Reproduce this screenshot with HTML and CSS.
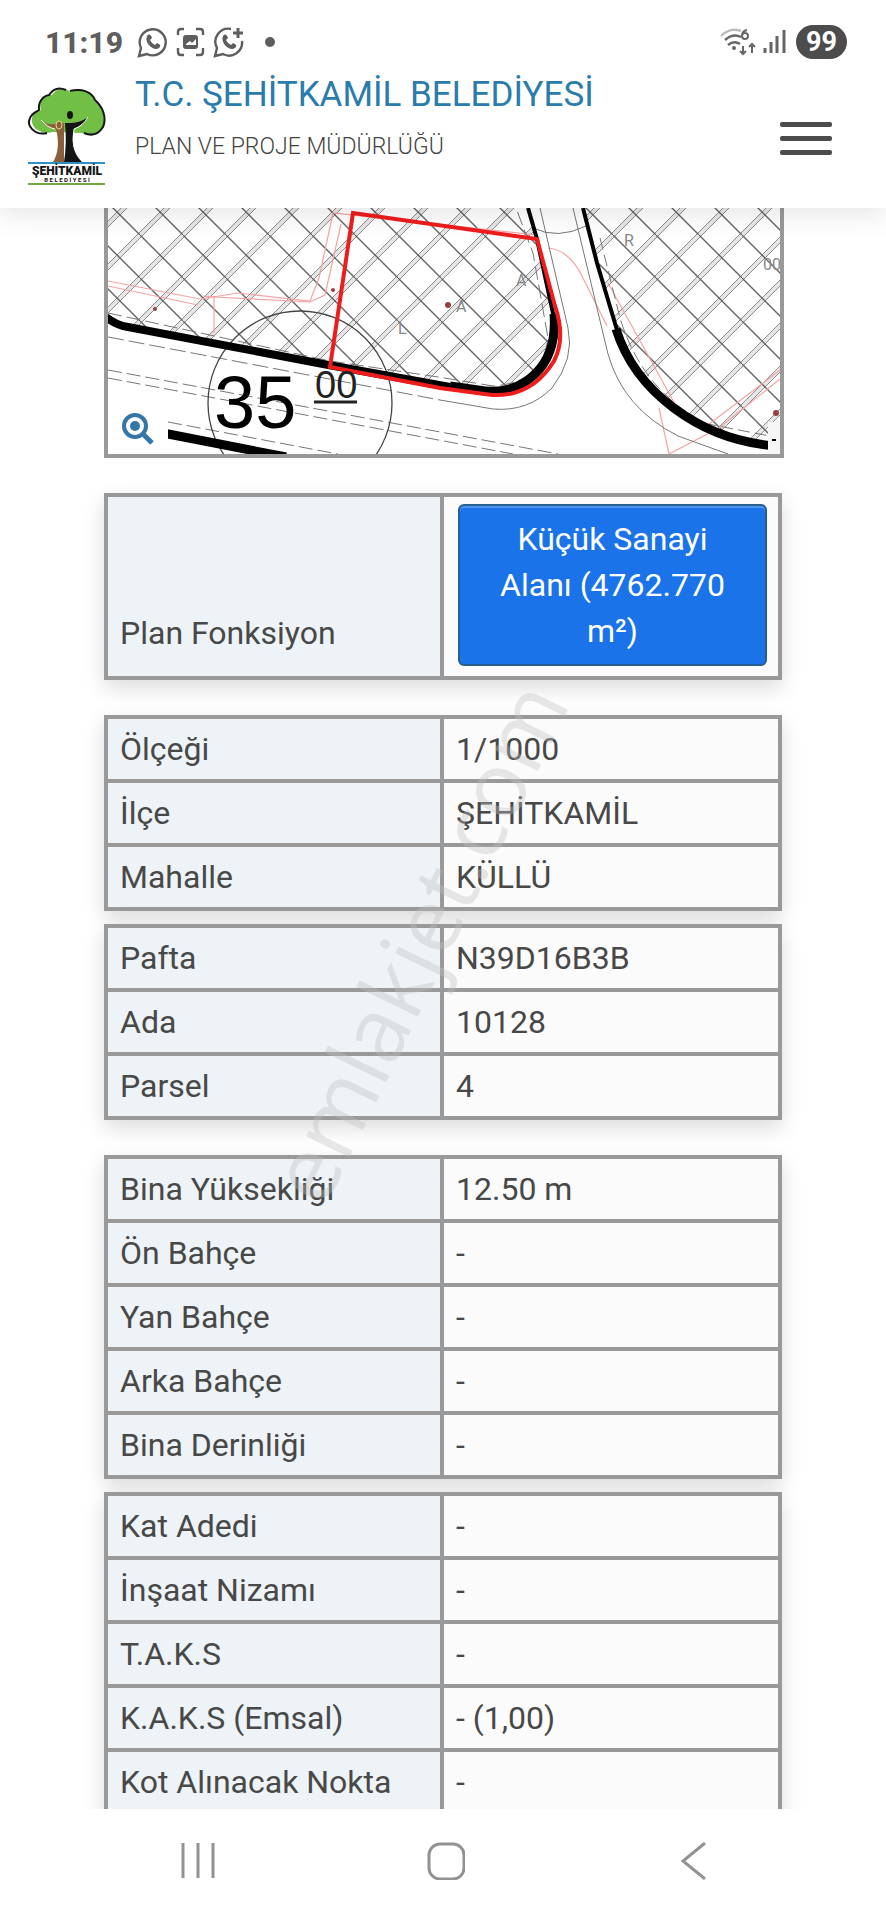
FILE: index.html
```html
<!DOCTYPE html>
<html lang="tr">
<head>
  <meta charset="UTF-8">
  <meta name="viewport" content="width=device-width, initial-scale=1.0">
  <title>T.C. Şehitkamil Belediyesi</title>
  <link rel="stylesheet" href="styles.css">
</head>
<body>
  <div class="status-bar">
    <span class="clock">11:19</span>
    <svg class="status-icons" width="140" height="34" viewBox="0 0 140 34" fill="none" stroke="#5e5e5e" stroke-width="2.4">
      <!-- whatsapp -->
      <path d="M2 31l2-8a13 13 0 1 1 6 6z"/>
      <path d="M10 11c2-3 4-1 5 2l-2 2c1 2 3 4 5 5l2-2c4 2 4 3 2 5-5 4-15-5-12-12z" fill="#5e5e5e" stroke="none"/>
      <!-- screenshot -->
      <path d="M41 10V7q0-3 3-3h3M59 4h4q3 0 3 3v3M41 23v4q0 3 3 3h3M59 30h4q3 0 3-3v-4"/>
      <rect x="46" y="10" width="15" height="14" rx="3" fill="#5e5e5e" stroke="none"/>
      <path d="M49 20v-1l4-3 2 2 4-4v6z" fill="#fff" stroke="none"/>
      <!-- whatsapp + -->
      <path d="M94 4a13 13 0 0 0-14 19l-2 8 8-2a13 13 0 0 0 19-13"/>
      <path d="M101 3v10M96 8h10" stroke-width="3"/>
      <path d="M86 11c2-3 4-1 5 2l-2 2c1 2 3 4 5 5l2-2c4 2 4 3 2 5-5 4-15-5-12-12z" fill="#5e5e5e" stroke="none"/>
      <circle cx="133" cy="17" r="5" fill="#5e5e5e" stroke="none"/>
    </svg>
    <svg class="signal-icons" width="68" height="28" viewBox="0 0 68 28" fill="none" stroke="#666" stroke-width="2.4">
      <path d="M1 8Q10-1 21 3" stroke="#bbb"/>
      <path d="M5 12q8-7 16-3M8 17q6-5 12-1"/>
      <circle cx="14" cy="20" r="2" fill="#666" stroke="none"/>
      <path d="M27 2q-5 1-5 6m0 0a3 3 0 1 0 6 0 3 3 0 1 0-6 0" stroke-width="2"/>
      <path d="M23 18v8m-3-3l3 3 3-3M32 25V16m-3 3l3-3 3 3" stroke-width="2"/>
      <path d="M45 20v5M51 14v11M57 8v17M64 2v23" stroke-width="3"/>
    </svg>
    <span class="battery">99</span>
  </div>

  <header class="header">
    <svg class="logo" width="80" height="100" viewBox="0 0 80 100">
      <path d="M26 46C14 49 3 42 5 32c1-4 5-7 9-8-3-8 4-15 11-15 6-9 17-6 18-3 9-3 22-1 25 8 7 8 12 17 8 26-4 9-13 11-21 7z" fill="#71bf44"/>
      <path d="M20 47C8 50-1 40 3 32c2-5 6-6 9-8-1-8 4-14 10-15 4-6 10-8 17-5M43 5c12-3 22 1 25 9 8 7 12 18 8 27-5 8-12 9-19 6" fill="none" stroke="#151515" stroke-width="2"/>
      <path d="M14 35q8 8 15 8 5 20-3 33h11V37l-9 1q-8 1-14-3z" fill="#8b5e3c"/>
      <path d="M38 37c9 0 15 0 23-6-2 6-9 9-14 12-3 13-1 24 8 33H37q3-18 1-39z" fill="#151515"/>
      <path d="M14 34q7 8 14 9M61 31q-5 9-14 12-2 12 1 21" fill="none" stroke="#fff"/>
      <ellipse cx="43" cy="29" rx="3" ry="4" fill="#151515"/>
      <ellipse cx="32" cy="39" rx="3" ry="4" fill="#8b5e3c" stroke="#eadb88"/>
      <path d="M1 77h77" stroke="#2c91c5" stroke-width="2"/>
      <path d="M1 98h77" stroke="#71a83f" stroke-width="2"/>
      <text x="40" y="89" class="logo-name">ŞEHİTKAMİL</text>
      <text x="40" y="96" class="logo-sub">B E L E D İ Y E S İ</text>
    </svg>
    <div class="header-text">
      <h1>T.C. ŞEHİTKAMİL BELEDİYESİ</h1>
      <p>PLAN VE PROJE MÜDÜRLÜĞÜ</p>
    </div>
    <button class="burger-btn" aria-label="Menü">
      <span></span><span></span><span></span>
    </button>
  </header>

  <main class="content">
    <div class="map">
      <svg class="map-img" viewBox="0 0 672 246" preserveAspectRatio="xMidYMid slice">
        <defs>
          <pattern id="hatch" width="43" height="43" patternUnits="userSpaceOnUse" patternTransform="translate(32 27)">
            <path d="M-5 48L48-5M-5 5L5-5M38 48L48 38" stroke="#e6e6e6" stroke-width="4"/>
            <path d="M0 40L40 0M3 43L43 3M0 3L3 0M40 43L43 40" stroke="#8c8c8c"/>
            <path d="M-1-1L44 44" stroke="#666" stroke-width="1.4"/>
          </pattern>
        </defs>
        <rect width="672" height="246" fill="#fff"/>
        <path d="M0 0H420L429 31 444 95 447 112C446 150 425 182 389 184L342 177 15 117 0 110z" fill="url(#hatch)"/>
        <path d="M475 0L489 55 507 119C530 185 590 225 672 238V0z" fill="url(#hatch)"/>

        <!-- cadastral lines -->
        <g fill="none" stroke="#f5a3a3" stroke-width="1.2">
          <path d="M0 73L92 91 130 85 202 93 211 70 225 5 429 27"/>
          <path d="M0 78L90 97M95 88l11 1v36M106 89l96 5 15-7 16-71"/>
          <path d="M440 40q22 2 35 30l24 48M500 75l67 121M551 200l10 46 50-26 61-49M600 217l72-55"/>
        </g>
        <g fill="none" stroke="#777">
          <path d="M0 105L222 153 330 169 385 178Q435 175 440 130L425 45 408 0" stroke-dasharray="14 5"/>
          <path d="M0 129L332 192" stroke-dasharray="16 5"/>
          <path d="M432 0L460 120Q467 150 444 180 420 204 385 201L332 192"/>
          <path d="M465 0L500 146Q515 200 570 228L620 246"/>
          <path d="M492 30L512 110Q535 185 600 216L672 230" stroke-dasharray="12 5"/>
          <path d="M0 162L450 246M0 170L405 246M60 214L230 246" stroke-dasharray="14 5"/>
          <path d="M425 20Q450 32 478 18"/>
        </g>
        <circle cx="192" cy="195" r="92" fill="none" stroke="#444" stroke-width="1.3"/>

        <!-- roads -->
        <g fill="none" stroke="#000">
          <path d="M-2 109Q8 117 20 119L215 156 342 179" stroke-width="8"/>
          <path d="M342 178L370 182Q405 188 427 166 449 145 446 106" stroke-width="9"/>
          <path d="M420 0L429 31 446 110M475 0L489 55 509 122" stroke-width="4"/>
          <path d="M508 121C527 182 590 232 668 238" stroke-width="9"/>
          <path d="M55 225L178 249" stroke-width="9"/>
        </g>
        <path d="M222 159L245 5 429 31 447 98Q458 130 446 153 424 189 384 187L332 180z" fill="none" stroke="#ef1c1c" stroke-width="4"/>

        <g fill="#964040">
          <circle cx="47" cy="101" r="2"/><circle cx="225" cy="82" r="2"/>
          <circle cx="340" cy="97" r="3"/><circle cx="668" cy="205" r="3"/>
        </g>
        <g class="map-mark">
          <text x="516" y="38">R</text><text x="655" y="62">00</text><text x="348" y="104">A</text>
          <text x="290" y="126">L</text><text x="408" y="78">A</text>
        </g>
        <text x="106" y="220" class="road-width">35</text>
        <text x="207" y="190" class="road-cm">00</text>
        <path d="M206 194h43" stroke="#222" stroke-width="3"/>
        <path d="M660 214h12v32h-12z" fill="#f6f6f6"/>
        <path d="M664 232h4" stroke="#000" stroke-width="2"/>
      </svg>
      <button class="zoom-btn" aria-label="Yakınlaştır">
        <svg width="34" height="34" viewBox="0 0 34 34" fill="none" stroke="#3576a8">
          <circle cx="14" cy="14" r="11" stroke-width="4"/>
          <circle cx="14" cy="14" r="5" fill="#3576a8" stroke="none"/>
          <path d="M22 22l9 9" stroke-width="5"/>
        </svg>
      </button>
    </div>

    <table class="info function">
      <tr>
        <th>Plan Fonksiyon</th>
        <td><button class="plan-btn">Küçük Sanayi Alanı (4762.770 m²)</button></td>
      </tr>
    </table>

    <table class="info">
      <tr><th>Ölçeği</th><td>1/1000</td></tr>
      <tr><th>İlçe</th><td>ŞEHİTKAMİL</td></tr>
      <tr><th>Mahalle</th><td>KÜLLÜ</td></tr>
    </table>

    <table class="info joined">
      <tr><th>Pafta</th><td>N39D16B3B</td></tr>
      <tr><th>Ada</th><td>10128</td></tr>
      <tr><th>Parsel</th><td>4</td></tr>
    </table>

    <table class="info">
      <tr><th>Bina Yüksekliği</th><td>12.50 m</td></tr>
      <tr><th>Ön Bahçe</th><td>-</td></tr>
      <tr><th>Yan Bahçe</th><td>-</td></tr>
      <tr><th>Arka Bahçe</th><td>-</td></tr>
      <tr><th>Bina Derinliği</th><td>-</td></tr>
    </table>

    <table class="info joined">
      <tr><th>Kat Adedi</th><td>-</td></tr>
      <tr><th>İnşaat Nizamı</th><td>-</td></tr>
      <tr><th>T.A.K.S</th><td>-</td></tr>
      <tr><th>K.A.K.S (Emsal)</th><td>- (1,00)</td></tr>
      <tr><th>Kot Alınacak Nokta</th><td>-</td></tr>
    </table>
  </main>

  <nav class="nav-bar">
    <button aria-label="Son uygulamalar">
      <svg width="38" height="38" viewBox="0 0 38 38" stroke="#929292" stroke-width="3"><path d="M4 1v35M19 1v35M34 1v35"/></svg>
    </button>
    <button aria-label="Ana ekran">
      <svg width="38" height="38" viewBox="0 0 38 38" fill="none" stroke="#929292" stroke-width="3"><rect x="2" y="2" width="35" height="35" rx="11"/></svg>
    </button>
    <button aria-label="Geri">
      <svg width="38" height="38" viewBox="0 0 38 38" fill="none" stroke="#929292" stroke-width="3"><path d="M30 1L8 19l22 18"/></svg>
    </button>
  </nav>

  <div class="watermark">emlakjet.com</div>
</body>
</html>
```

FILE: styles.css
```css
* {
  box-sizing: border-box;
}

body {
  margin: 0;
  height: 100vh;
  display: flex;
  flex-direction: column;
  position: relative;
  overflow: hidden;
  background: #fff;
  color: #484848;
  font-family: Roboto, sans-serif;
  font-size: 32px;
}

button {
  border: none;
  background: none;
  padding: 0;
  font: inherit;
  cursor: pointer;
}

svg {
  display: block;
}

.status-bar {
  display: flex;
  align-items: center;
  height: 72px;
  padding: 12px 39px 0 45px;
  background: #fff;
  z-index: 2;
}

.clock {
  color: #5e5e5e;
  font-size: 30px;
  font-weight: 800;
}

.status-icons {
  margin-left: 14px;
}

.signal-icons {
  margin-left: auto;
}

.battery {
  margin-left: 8px;
  width: 51px;
  height: 34px;
  border-radius: 17px;
  background: #4c4c4c;
  color: #fff;
  font-size: 27px;
  font-weight: bold;
  line-height: 34px;
  text-align: center;
}

.header {
  display: flex;
  height: 136px;
  padding: 0 54px 0 27px;
  background: #fff;
  box-shadow: 0 4px 28px rgba(0, 0, 0, 0.12);
  z-index: 1;
}

.logo {
  margin-top: 14px;
  overflow: visible;
}

.logo-name {
  font-size: 12px;
  font-weight: 900;
  text-anchor: middle;
  fill: #151515;
}

.logo-sub {
  font-size: 6px;
  font-weight: bold;
  text-anchor: middle;
  fill: #151515;
}

.header-text {
  flex: 1;
  padding-left: 28px;
}

.header h1 {
  margin: 0;
  color: #2a7cac;
  font-size: 35px;
  font-weight: normal;
  line-height: 46px;
}

.header p {
  margin: 15px 0 0;
  color: #444;
  font-size: 23px;
  font-weight: 300;
  line-height: 28px;
}

.burger-btn {
  display: flex;
  flex-direction: column;
  justify-content: space-between;
  width: 52px;
  height: 33px;
  margin-top: 50px;
}

.burger-btn span {
  display: block;
  width: 100%;
  height: 5px;
  border-radius: 2px;
  background: #4c4c4c;
}

.content {
  flex: 1;
  min-height: 0;
  overflow: hidden;
  padding: 0 104px;
}

.map {
  position: relative;
  height: 250px;
  margin-right: -2px;
  border: 4px solid #999;
  border-top: none;
}

.map-img {
  width: 100%;
  height: 100%;
}

.map-mark {
  font-size: 16px;
  fill: #888;
}

.road-width {
  font-family: "Liberation Sans", sans-serif;
  font-size: 74px;
}

.road-cm {
  font-family: "Liberation Sans", sans-serif;
  font-size: 38px;
  fill: #222;
}

.zoom-btn {
  position: absolute;
  left: 0;
  bottom: 0;
  display: flex;
  align-items: center;
  justify-content: center;
  width: 60px;
  height: 50px;
  background: #fff;
}

.info {
  width: 100%;
  margin-top: 35px;
  border-collapse: collapse;
  table-layout: fixed;
  line-height: 46px;
  box-shadow: 0 8px 20px rgba(0, 0, 0, 0.14);
}

.info.joined {
  margin-top: 13px;
}

.info th,
.info td {
  height: 64px;
  padding: 5px 12px;
  border: 4px solid #999;
  text-align: left;
  font-weight: normal;
}

.info th {
  width: 336px;
  background: #edf3f6;
}

.info td {
  background: #fbfbfb;
}

.info.function th {
  vertical-align: bottom;
  padding-bottom: 20px;
}

.info.function td {
  padding: 7px 11px 7px 14px;
}

.plan-btn {
  display: block;
  width: 100%;
  margin-bottom: 3px;
  padding: 10px 24px;
  border: 2px solid #27608f;
  border-radius: 6px;
  background: #1a73e8;
  color: #fff;
  line-height: 46px;
  box-shadow: inset 0 2px 0 #4d94ee;
}

.nav-bar {
  display: flex;
  height: 111px;
  padding: 33px 68px 0 74px;
  background: #fff;
  z-index: 1;
}

.nav-bar button {
  flex: 1;
  display: flex;
  justify-content: center;
  height: 38px;
}

.watermark {
  position: absolute;
  top: 49%;
  left: 47%;
  z-index: 3;
  color: rgba(190, 190, 190, 0.36);
  font-family: "Open Sans", sans-serif;
  font-size: 90px;
  font-weight: 500;
  line-height: 100px;
  transform: translate(-50%, -50%) rotate(-64deg);
  pointer-events: none;
}
```
